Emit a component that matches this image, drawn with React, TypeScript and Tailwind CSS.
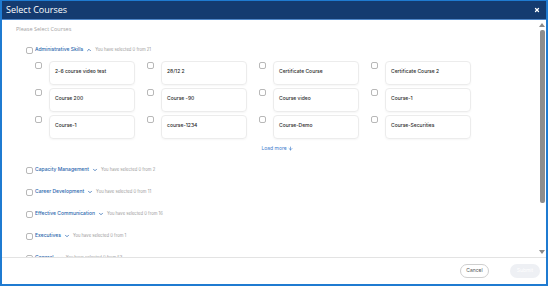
import { ArrowDown, ChevronDown, ChevronUp, X } from "lucide-react";

const courses = [
  "2-6 course video test",
  "28/12 2",
  "Certificate Course",
  "Certificate Course 2",
  "Course 200",
  "Course -90",
  "Course video",
  "Course-1",
  "Course-1",
  "course-1234",
  "Course-Demo",
  "Course-Securities",
];

const categories = [
  { name: "Capacity Management", total: 2 },
  { name: "Career Development", total: 11 },
  { name: "Effective Communication", total: 16 },
  { name: "Executives", total: 1 },
  { name: "General", total: 53 },
];

const Box = ({ className = "" }: { className?: string }) => (
  <span
    className={`block w-[7px] h-[7px] rounded-[2px] border border-[#b8b8b8] bg-white shrink-0 ${className}`}
  />
);

const CategoryRow = ({
  name,
  total,
  open,
}: {
  name: string;
  total: number;
  open?: boolean;
}) => (
  <div className="flex items-center h-[22px] ml-[10px]">
    <Box />
    <span className="ml-[2px] text-[5px] font-medium text-[#2a66ad]">{name}</span>
    {open ? (
      <ChevronUp size={6} strokeWidth={3} className="ml-[3px] text-[#2a66ad]" />
    ) : (
      <ChevronDown size={6} strokeWidth={3} className="ml-[3px] text-[#2a66ad]" />
    )}
    <span className="ml-[3px] text-[4.2px] text-[#9a9a9a]">
      You have selected 0 from {total}
    </span>
  </div>
);

const App = () => {
  return (
    <div
      className="w-[548px] h-[286px] flex flex-col bg-white border-2 border-t border-[#1f7bd1] overflow-hidden"
      style={{ fontFamily: "Inter, 'Noto Sans', sans-serif" }}
    >
      <div className="h-[19px] shrink-0 flex items-center justify-between pl-[4px] pr-[6px] bg-[#143b70] border-b border-[#4f86c8]">
        <span
          className="text-[9px] text-white"
          style={{ fontFamily: "'Open Sans', sans-serif" }}
        >
          Select Courses
        </span>
        <X size={6} strokeWidth={5} className="text-white" />
      </div>

      <div className="flex flex-1 min-h-0">
        <div className="flex-1 overflow-hidden pl-[14px] pt-[5px]">
          <div
            className="text-[5.5px] text-[#a3a3a3] h-[9px] leading-[9px]"
            style={{ fontFamily: "'Open Sans', sans-serif" }}
          >
            Please Select Courses
          </div>
          <div className="mt-[5px]">
            <CategoryRow name="Administrative Skills" total={21} open />
          </div>
          <div className="ml-[19px] grid grid-cols-[repeat(4,112px)] gap-y-[3px]">
            {courses.map((c, i) => (
              <div key={i} className="flex items-start gap-[7px]">
                <Box className="mt-[1px]" />
                <div className="w-[86px] h-[24px] rounded-[4px] border border-[#ececec] shadow-[0_1px_2px_rgba(0,0,0,0.04)] pl-[5px] pt-[6px] text-[5px] font-medium text-[#2b2b2b]">
                  {c}
                </div>
              </div>
            ))}
          </div>
          <div className="flex justify-center items-center mt-[5px] h-[9px] text-[5px] text-[#3d7ccc]">
            Load more
            <ArrowDown size={5} strokeWidth={3} className="ml-[1px]" />
          </div>
          <div className="mt-[6px]">
            {categories.map((c) => (
              <CategoryRow key={c.name} name={c.name} total={c.total} />
            ))}
          </div>
        </div>

        <div className="w-[8px] shrink-0 flex flex-col items-center pt-[3px] pb-[3px]">
          <span className="w-0 h-0 border-x-[3px] border-x-transparent border-b-[4px] border-b-[#8a8a8a]" />
          <div className="mt-[3px] w-[5px] h-[173px] rounded-[2px] bg-[#8d8d8d]" />
          <div className="flex-1" />
          <span className="w-0 h-0 border-x-[3px] border-x-transparent border-t-[4px] border-t-[#8a8a8a]" />
        </div>
      </div>

      <div className="h-[27px] shrink-0 flex items-center justify-end gap-[21px] pr-[6px] border-t border-[#e3e3e3]">
        <button className="w-[29px] h-[14px] rounded-full border border-[#cfcfcf] text-[5px] text-[#555] bg-white">
          Cancel
        </button>
        <button className="w-[30px] h-[14px] rounded-full text-[5px] text-white bg-[#eef0f4]">
          Submit
        </button>
      </div>
    </div>
  );
};
export default App;
